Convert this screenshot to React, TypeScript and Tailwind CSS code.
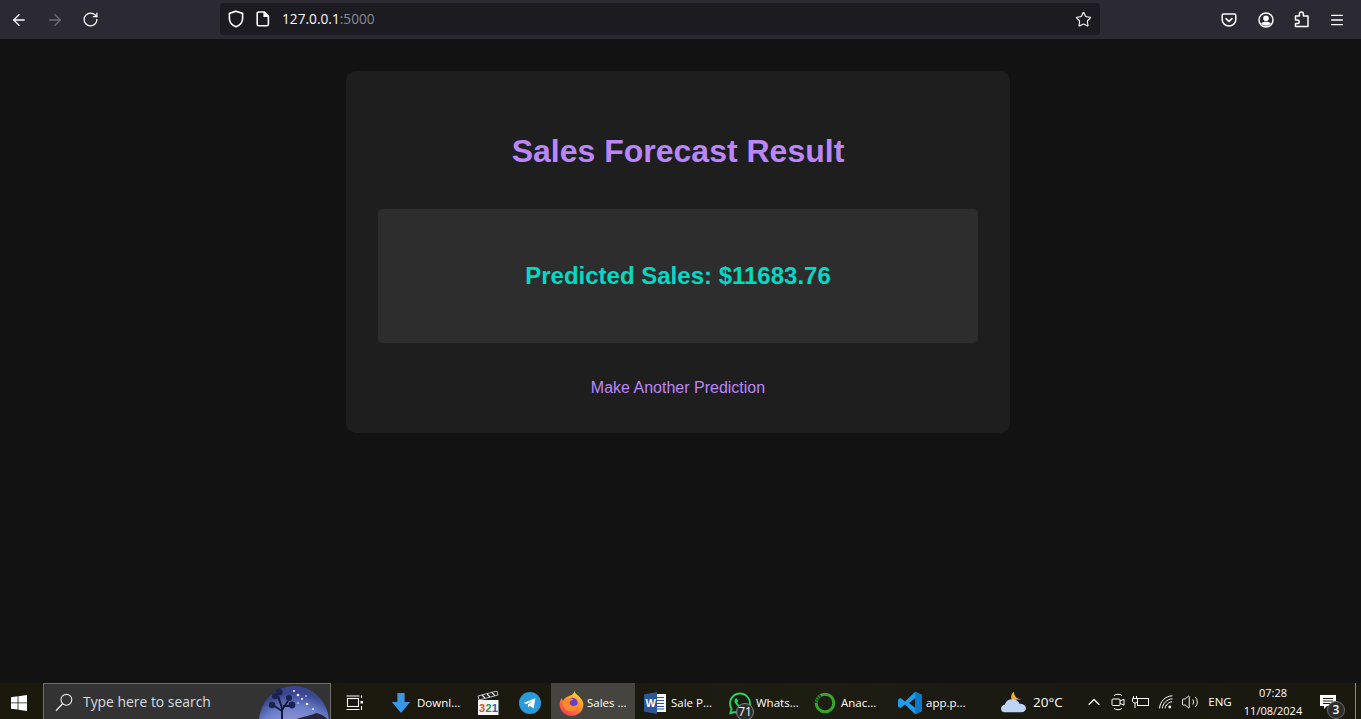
import { ArrowLeft, ArrowRight, RotateCw, Star, Menu, ChevronUp, Volume2 } from "lucide-react";
import { FaWhatsapp } from "react-icons/fa";

function ShieldIcon() {
  return (
    <svg width="16" height="18" viewBox="0 0 16 18" fill="none" stroke="#fbfbfe" strokeWidth="1.6">
      <path d="M8 1.2 14.6 3.4V8.6C14.6 12.6 11.8 15.4 8 16.8 4.2 15.4 1.4 12.6 1.4 8.6V3.4Z" />
    </svg>
  );
}
function PageIcon() {
  return (
    <svg width="14" height="16" viewBox="0 0 14 16" fill="none" stroke="#fbfbfe" strokeWidth="1.6">
      <path d="M2.8 1H8.4L12.4 5V13.2C12.4 14.2 11.8 14.8 10.8 14.8H2.8C1.8 14.8 1.2 14.2 1.2 13.2V2.6C1.2 1.6 1.8 1 2.8 1Z" />
      <path d="M8.2 1V5.2H12.4" fill="#fbfbfe" />
    </svg>
  );
}
function PocketIcon() {
  return (
    <svg width="16" height="16" viewBox="0 0 16 16" fill="none" stroke="#fbfbfe" strokeWidth="1.5">
      <path d="M2.6 2H13.4C14.2 2 14.8 2.6 14.8 3.4V7.4C14.8 11.2 11.8 14 8 14 4.2 14 1.2 11.2 1.2 7.4V3.4C1.2 2.6 1.8 2 2.6 2Z" />
      <path d="M5 6.6 8 9.4 11 6.6" strokeLinecap="round" />
    </svg>
  );
}
function AccountIcon() {
  return (
    <svg width="16" height="16" viewBox="0 0 16 16" fill="none">
      <circle cx="8" cy="8" r="7" stroke="#fbfbfe" strokeWidth="1.5" />
      <circle cx="8" cy="6.2" r="2.8" fill="#fbfbfe" />
      <path d="M3.2 11.6C4 10.2 5.6 9.8 8 9.8S12 10.2 12.8 11.6C11.6 13 10 13.8 8 13.8S4.4 13 3.2 11.6Z" fill="#fbfbfe" />
    </svg>
  );
}
function PuzzleIcon() {
  return (
    <svg width="16" height="17" viewBox="0 0 16 17" fill="none" stroke="#fbfbfe" strokeWidth="1.5" strokeLinejoin="round">
      <path d="M1.5 5H5.4V3C5.4 1.8 6.2 1 7.4 1S9.4 1.8 9.4 3V5H14V15.6H1.5V12.6H3.4C4.6 12.6 5.2 11.8 5.2 10.8S4.6 9 3.4 9H1.5Z" />
    </svg>
  );
}
function WindowsLogo() {
  return (
    <svg width="16" height="16" viewBox="0 0 16 16" fill="#ffffff">
      <path d="M0 2.3 6.6 1.3V7.5H0ZM7.4 1.2 16 0V7.5H7.4ZM0 8.3H6.6V14.6L0 13.7ZM7.4 8.3H16V16L7.4 14.8Z" />
    </svg>
  );
}
function SearchGlass() {
  return (
    <svg width="18" height="19" viewBox="0 0 18 19" fill="none" stroke="#e8e8e8" strokeWidth="1.1">
      <circle cx="11.4" cy="6.8" r="5.4" />
      <path d="M7.6 10.8 1 17.8" strokeWidth="1.3" />
    </svg>
  );
}
function JoshuaTree() {
  return (
    <svg width="72" height="36" viewBox="0 0 72 36" className="shrink-0">
      <defs>
        <radialGradient id="sky" cx="0.52" cy="0.95" r="0.85">
          <stop offset="0" stopColor="#e8883c" />
          <stop offset="0.2" stopColor="#b98aa8" />
          <stop offset="0.48" stopColor="#9a94d4" />
          <stop offset="0.78" stopColor="#6a80cc" />
          <stop offset="1" stopColor="#3a4690" />
        </radialGradient>
      </defs>
      <ellipse cx="36" cy="38" rx="35" ry="36" fill="url(#sky)" />
      <path d="M36 36C46 32 52 32 58 29 62 30 66 31 70 36Z" fill="#2a2238" />
      <path d="M24 36V24M24 27 15 21M24 26 30 17M24 24 20 12M25 22 34 22" stroke="#141a38" strokeWidth="2" fill="none" />
      <circle cx="14" cy="21" r="3.2" fill="#1b2350" />
      <circle cx="17" cy="12" r="3.2" fill="#1b2350" />
      <circle cx="21" cy="8" r="3.6" fill="#1b2350" />
      <circle cx="31" cy="14" r="3" fill="#1b2350" />
      <circle cx="34" cy="21" r="3.4" fill="#1b2350" />
      <g fill="#fff6ea">
        <circle cx="36" cy="7" r="1" />
        <circle cx="40" cy="11" r="1.3" />
        <circle cx="44" cy="15" r="1" />
        <circle cx="49" cy="20" r="1.3" />
        <circle cx="55" cy="25" r="0.9" />
        <circle cx="40" cy="19" r="0.8" />
        <circle cx="48" cy="12" r="0.8" />
      </g>
    </svg>
  );
}
function TaskView() {
  return (
    <svg width="18" height="16" viewBox="0 0 18 16" fill="none" stroke="#fff" strokeWidth="1.1">
      <rect x="1.5" y="3.5" width="11" height="8" />
      <path d="M0.5 1H13.5M0.5 14.5H13.5M15.5 0.5V3M15.5 11V15" />
      <rect x="14.5" y="6" width="2.5" height="2.5" fill="#fff" stroke="none" />
    </svg>
  );
}
function DownloadArrow() {
  return (
    <svg width="20" height="20" viewBox="0 0 20 22">
      <path d="M6 0H14V10H20L10 22 0 10H6Z" fill="#3b96e8" />
    </svg>
  );
}
function MediaPlayer() {
  return (
    <svg width="22" height="24" viewBox="0 0 22 24">
      <path d="M1 5 20 0 21 4 2 9Z" fill="#1d1d1d" stroke="#e8e8e8" strokeWidth="0.8" />
      <path d="M5 4 8 7M10 3 13 6M15 1.6 18 4.6" stroke="#e8e8e8" strokeWidth="1.2" />
      <rect x="1" y="9" width="20.5" height="15" fill="#f6f6f6" />
      <text x="2" y="21" fontSize="11" fontWeight="700" fontFamily="Liberation Sans, sans-serif" fill="#d4502a">3</text>
      <text x="8.4" y="21" fontSize="11" fontWeight="700" fontFamily="Liberation Sans, sans-serif" fill="#2f8f3a">2</text>
      <text x="14.8" y="21" fontSize="11" fontWeight="700" fontFamily="Liberation Sans, sans-serif" fill="#2a5fc0">1</text>
    </svg>
  );
}
function Telegram() {
  return (
    <svg width="22" height="22" viewBox="0 0 22 22">
      <circle cx="11" cy="11" r="11" fill="#2a9bd8" />
      <path d="M4.6 10.9 16.4 6.2 14.6 16.4 11 13.8 9.2 15.6 8.8 12.6 14.2 8.2 7.6 12Z" fill="#fff" />
    </svg>
  );
}
function Firefox() {
  return (
    <svg width="25" height="25" viewBox="0 0 24 24" className="shrink-0">
      <defs>
        <linearGradient id="ff" x1="0.8" y1="0" x2="0.2" y2="1">
          <stop offset="0" stopColor="#ffe23f" />
          <stop offset="0.4" stopColor="#ff9a2a" />
          <stop offset="1" stopColor="#f0345c" />
        </linearGradient>
      </defs>
      <path d="M15 0C15.2 2.6 17.4 3.4 19.6 5.6 22.4 8.4 23.4 11 23.4 13 23.4 19.2 18.4 24 12 24 5.6 24 0.6 19 0.6 13 0.6 10.4 1.4 8.2 2.8 6.6 3 8 3.6 8.8 4.4 9.2 5.2 6.6 7.4 5.4 9.4 5 11.4 4 14.4 3 15 0Z" fill="url(#ff)" />
      <circle cx="13" cy="11.4" r="5" fill="#6a3fc8" />
      <path d="M4.4 9.4C7 7 11 6.6 14.2 7.8 12.2 8.6 10.4 9.4 10.2 11.2 10 13.4 12.6 14.8 14.8 14.2 16.4 13.8 18 12.8 19 11.4 19 16 15.6 19.4 11.4 19.4 7 19.4 3.8 16 3.8 12.2 3.8 11.2 4 10.4 4.4 9.4Z" fill="#ff8a2a" />
    </svg>
  );
}
function WordIcon() {
  return (
    <svg width="22" height="22" viewBox="0 0 22 22">
      <rect x="8" y="2" width="14" height="18" fill="#f4f6fb" />
      <path d="M11 5.5H20M11 8.5H20M11 11.5H20M11 14.5H20M11 17H20" stroke="#2b579a" strokeWidth="1.1" />
      <path d="M0 2.6 13 0V22L0 19.4Z" fill="#2b579a" />
      <text x="1.6" y="15" fontSize="11" fontWeight="700" fontFamily="Liberation Sans, sans-serif" fill="#fff">W</text>
    </svg>
  );
}
function Anaconda() {
  return (
    <svg width="22" height="22" viewBox="0 0 22 22" fill="none">
      <circle cx="11" cy="11" r="8.8" stroke="#35a82c" strokeWidth="3" />
      <path d="M2.2 11A8.8 8.8 0 0 1 7 3.2" stroke="#14421a" strokeWidth="3" strokeDasharray="1.5 1" />
    </svg>
  );
}
function VSCode() {
  return (
    <svg width="24" height="24" viewBox="0 0 24 24">
      <path d="M17.2 0.8 24 4V20L17.2 23.2 7 13.6 2.6 17 0 15.6V8.4L2.6 7 7 10.4ZM17.4 7 11 12 17.4 17Z" fill="#1f9cf0" />
      <path d="M17.2 0.8 24 4V20L17.2 23.2V17.2L17.4 17V7L17.2 6.8Z" fill="#0f78c4" />
    </svg>
  );
}
function Weather() {
  return (
    <svg width="25" height="24" viewBox="0 0 27 24">
      <path d="M14 1C11 3 10 7 12 10L22 9C17 9 14 6 14 1Z" fill="#f4a93a" />
      <path d="M4 23C1 23 0 21 0 19 0 17 2 15 4 15 5 11 8 9 12 9 16 9 19 11 20 14 24 14 27 16 27 19 27 21 25 23 22 23Z" fill="#bcd4f6" />
    </svg>
  );
}
function MeetIcon() {
  return (
    <svg width="14" height="18" viewBox="0 0 14 18" fill="none" stroke="#fff" strokeWidth="1">
      <path d="M3 2.6C5 0.8 9 0.8 11 2.6M3 15.4C5 17.2 9 17.2 11 15.4" />
      <rect x="1" y="6" width="8" height="6.5" rx="1" />
      <path d="M9 8 13 6.2V12.2L9 10.4" />
    </svg>
  );
}
function PowerIcon() {
  return (
    <svg width="18" height="14" viewBox="0 0 18 14" fill="none" stroke="#fff" strokeWidth="1">
      <rect x="5.5" y="3.5" width="11" height="7" />
      <path d="M1.5 1V3.5M4.5 1V3.5M0.5 3.5H5.5V6C5.5 7.2 4.2 8 3 8S0.5 7.2 0.5 6ZM3 8V13" />
    </svg>
  );
}
function WifiIcon() {
  return (
    <svg width="14" height="14" viewBox="0 0 14 14" fill="none" stroke="#fff" strokeWidth="1">
      <path d="M0.6 13.4C0.8 7 6 1 13.4 0.8M3.4 13.4C3.6 9 7.6 4 13.4 3.8M6.2 13.4C6.4 10.4 9.4 7 13 6.8" />
      <circle cx="10.8" cy="12" r="1.4" fill="#fff" stroke="none" />
    </svg>
  );
}
function Notification() {
  return (
    <svg width="18" height="16" viewBox="0 0 18 16">
      <path d="M1 1H17V12H8L5 15V12H1Z" fill="#fff" />
      <path d="M4 4.5H14M4 7H14M4 9.5H11" stroke="#1b1910" strokeWidth="1" />
    </svg>
  );
}

function TaskItem({ icon, label, width = "w-[85px]", active = false, badge }: { icon: React.ReactNode; label: string; width?: string; active?: boolean; badge?: string }) {
  return (
    <div className={`${width} relative flex h-full shrink-0 items-center pl-[8px] pt-[4px] ${active ? "bg-[#45443e]" : ""}`}>
      <div className="flex w-[24px] shrink-0 items-center justify-center">{icon}</div>
      <span className="ml-[4px] whitespace-nowrap text-[11.5px] text-white">{label}</span>
      {badge && (
        <span className="absolute left-[16px] top-[20px] flex h-[18px] w-[18px] items-center justify-center rounded-full border border-[#8a8a8a] bg-[#2c2c2a] text-[12px] leading-none text-white">
          {badge}
        </span>
      )}
    </div>
  );
}

export default function App() {
  return (
    <div className="flex h-[719px] w-[1361px] flex-col overflow-hidden bg-[#121212] font-['Open_Sans',sans-serif]">
      {/* Browser toolbar */}
      <header className="flex h-[39px] shrink-0 items-center bg-[#2b2a33]">
        <div className="flex w-[220px] shrink-0 items-center pl-[10px] gap-[18px]">
          <ArrowLeft size={18} color="#fbfbfe" strokeWidth={1.7} />
          <ArrowRight size={18} color="#6f6e75" strokeWidth={1.7} />
          <RotateCw size={17} color="#fbfbfe" strokeWidth={1.8} />
        </div>
        <div className="mb-[1px] flex h-[32px] w-[880px] shrink-0 items-center rounded-[4px] bg-[#1c1b22] pl-[8px] pr-[8px]">
          <ShieldIcon />
          <span className="ml-[12px] flex"><PageIcon /></span>
          <span className="ml-[12px] text-[13.7px] text-[#fbfbfe]">
            127.0.0.1<span className="text-[#8a898f]">:5000</span>
          </span>
          <span className="ml-auto flex"><Star size={17} color="#fbfbfe" strokeWidth={1.6} /></span>
        </div>
        <div className="ml-auto flex items-center gap-[20px] pr-[16px]">
          <span className="mr-[1px] flex"><PocketIcon /></span>
          <AccountIcon />
          <PuzzleIcon />
          <span className="ml-[-1px] flex"><Menu size={16} color="#fbfbfe" strokeWidth={2} /></span>
        </div>
      </header>

      {/* Page */}
      <main className="flex flex-1 justify-center bg-[#121212] pt-[32px]">
        <section className="ml-[-5px] h-[362px] w-[664px] rounded-[10px] bg-[#1e1e1e] p-[32px] font-['Liberation_Sans',sans-serif]">
          <h1 className="mt-[30px] text-center text-[32px] font-bold leading-[37px] text-[#bb86fc]">Sales Forecast Result</h1>
          <div className="mt-[39px] flex h-[134px] items-center justify-center rounded-[5px] bg-[#2d2d2d]">
            <p className="text-[24px] font-bold text-[#03dac6]">Predicted Sales: $11683.76</p>
          </div>
          <p className="mt-[36px] text-center text-[16px] leading-[18px] text-[#bb86fc]">Make Another Prediction</p>
        </section>
      </main>

      {/* Taskbar */}
      <footer className="flex h-[36px] shrink-0 items-center bg-[linear-gradient(90deg,#1c190c_0%,#1b1a10_45%,#1e1d12_60%,#1a1912_75%,#1b190e_100%)] text-white">
        <div className="flex h-full w-[43px] shrink-0 items-center justify-center pr-[5px] pt-[4px]"><WindowsLogo /></div>
        <div className="flex h-full w-[288px] shrink-0 items-center overflow-hidden border border-b-0 border-[#6f6f6f] bg-[#333333] pl-[11px]">
          <span className="flex pt-[2px]"><SearchGlass /></span>
          <span className="ml-[10px] whitespace-nowrap pt-[2px] text-[13.9px] text-[#d8dce0]">Type here to search</span>
          <span className="ml-auto flex"><JoshuaTree /></span>
        </div>
        <div className="flex h-full w-[50px] shrink-0 items-center justify-center pr-[2px] pt-[4px]"><TaskView /></div>
        <TaskItem icon={<DownloadArrow />} label="Downl..." />
        <div className="flex h-full w-[43px] shrink-0 items-center justify-center pt-[3px]"><MediaPlayer /></div>
        <div className="flex h-full w-[42px] shrink-0 items-center justify-center pt-[4px]"><Telegram /></div>
        <TaskItem icon={<Firefox />} label="Sales ..." active width="w-[84px]" />
        <TaskItem icon={<WordIcon />} label="Sale P..." />
        <TaskItem icon={<FaWhatsapp size={25} color="#25d366" />} label="Whats..." badge="71" />
        <TaskItem icon={<Anaconda />} label="Anac..." />
        <TaskItem icon={<VSCode />} label="app.p..." width="w-[84px]" />
        <div className="flex h-full w-[106px] shrink-0 items-center pl-[27px] pt-[2px]">
          <Weather />
          <span className="ml-[7px] text-[13.5px]">20°C</span>
        </div>
        <div className="flex h-full w-[28px] shrink-0 items-center justify-center pt-[2px]"><ChevronUp size={20} strokeWidth={1.4} /></div>
        <div className="flex h-full w-[20px] shrink-0 items-center justify-center pt-[2px]"><MeetIcon /></div>
        <div className="flex h-full w-[26px] shrink-0 items-center justify-center pt-[2px]"><PowerIcon /></div>
        <div className="flex h-full w-[24px] shrink-0 items-center justify-center pt-[2px]"><WifiIcon /></div>
        <div className="flex h-full w-[24px] shrink-0 items-center justify-center pt-[2px]"><Volume2 size={18} strokeWidth={1.2} /></div>
        <div className="flex h-full w-[36px] shrink-0 items-center justify-center pt-[2px] text-[11.5px]">ENG</div>
        <div className="flex h-full w-[70px] shrink-0 flex-col items-center justify-center pt-[1px] text-[11px] leading-[18px]">
          <span>07:28</span>
          <span>11/08/2024</span>
        </div>
        <div className="relative flex h-full w-[47px] shrink-0 items-center justify-center pr-[7px] pt-[2px]">
          <Notification />
          <span className="absolute left-[19px] top-[18px] flex h-[18px] w-[18px] items-center justify-center rounded-full border border-[#6a6a6a] bg-[#2c2c2a] text-[12px] font-semibold leading-none">3</span>
        </div>
        <div className="h-full w-[1px] shrink-0 bg-[#8a8a80]" />
      </footer>
    </div>
  );
}
